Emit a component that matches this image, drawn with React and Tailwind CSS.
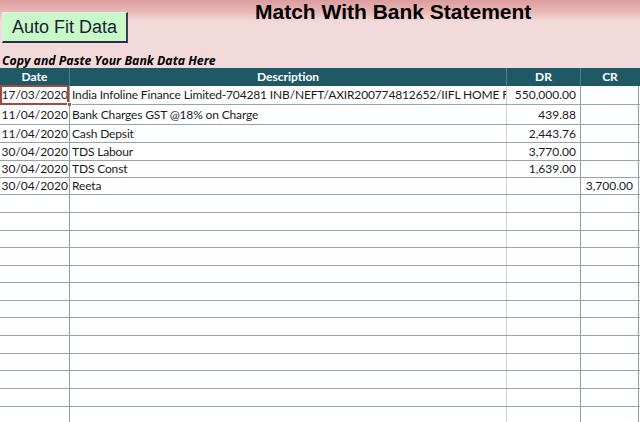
import React from 'react'

const rows = [
  { date: '17/03/2020', desc: 'India Infoline Finance Limited-704281 INB/NEFT/AXIR200774812652/IIFL HOME FINANCE', dr: '550,000.00', cr: '' },
  { date: '11/04/2020', desc: 'Bank Charges GST @18% on Charge', dr: '439.88', cr: '' },
  { date: '11/04/2020', desc: 'Cash Depsit', dr: '2,443.76', cr: '' },
  { date: '30/04/2020', desc: 'TDS Labour', dr: '3,770.00', cr: '' },
  { date: '30/04/2020', desc: 'TDS Const', dr: '1,639.00', cr: '' },
  { date: '30/04/2020', desc: 'Reeta', dr: '', cr: '3,700.00' },
]

// row heights picked off the screenshot, excel rows are not all equal
const heights = [
  'h-[19px]', 'h-[20px]', 'h-[18px]', 'h-[18px]', 'h-[17px]', 'h-[17px]',
  'h-[18px]', 'h-[18px]', 'h-[17px]', 'h-[18px]', 'h-[17px]', 'h-[18px]',
  'h-[17px]', 'h-[18px]', 'h-[18px]', 'h-[17px]', 'h-[18px]', 'h-[18px]', 'h-[17px]',
]

function Row({ row, height, first }) {
  return (
    <div className={`flex ${height} border-b border-[#8fa8b0] text-[12px] leading-none text-[#1a1a1a]`}>
      <div className="relative flex w-[70px] items-center justify-end border-r border-[#8aa3ab] pr-[1px]">
        {first && (
          <>
            <div className="pointer-events-none absolute inset-x-0 -top-px -bottom-px border-2 border-[#a24a3e]" />
            <div className="absolute -bottom-[3px] -right-[3px] h-[5px] w-[5px] border border-white bg-[#a24a3e]" />
          </>
        )}
        <span>{row?.date}</span>
      </div>
      {/* long bank narrations get clipped at the column edge, like excel */}
      <div className="flex w-[437px] items-center overflow-hidden whitespace-nowrap border-r border-[#c5d3d8] pl-[2px] tracking-[-0.15px]">
        <span className="min-w-0">{row?.desc}</span>
      </div>
      <div className="flex w-[74px] items-center justify-end border-r border-[#8aa3ab] pr-[4px]">
        {row?.dr}
      </div>
      <div className="flex w-[58px] items-center justify-end border-r border-[#8aa3ab] pr-[5px]">
        {row?.cr}
      </div>
    </div>
  )
}

export default function App() {
  return (
    <div className="h-[422px] w-[640px] overflow-hidden bg-white font-['Lato',sans-serif]">
      {/* ===== TOP BAND ===== */}
      <div className="flex h-[68px] flex-col bg-[linear-gradient(to_bottom,#dc9c9c_0px,#e8b8b8_12px,#efcaca_17px,#f2dada_22px)]">
        <div className="flex flex-1 items-start">
          <button
            className="
              ml-[2px] mt-[12px] h-[31px] w-[126px]
              border border-t-[#e8e8e8] border-l-[#e8e8e8] border-r-[#3c3c58] border-b-[#2c2c48]
              border-b-2 border-r-2 bg-[#c8fac8]
              font-['Liberation_Sans',Arial,sans-serif] text-[18px] leading-none text-[#1c1c38]
            "
          >
            Auto Fit Data
          </button>
          <h1 className="ml-[127px] pt-[1px] font-['Liberation_Sans',Arial,sans-serif] text-[21px] font-bold leading-[22px] text-black">
            Match With Bank Statement
          </h1>
        </div>
        <div className="pl-[2px] font-['Open_Sans',sans-serif] text-[12.3px] font-bold italic leading-[15px] text-black">
          Copy and Paste Your Bank Data Here
        </div>
      </div>

      {/* ===== HEADER ===== */}
      <div className="flex h-[18px] bg-[#1f5966] text-[12px] font-bold leading-none text-white">
        <div className="flex w-[70px] items-center justify-center border-r border-[#4a8290]">Date</div>
        <div className="flex w-[437px] items-center justify-center border-r border-[#4a8290]">Description</div>
        <div className="flex w-[74px] items-center justify-center border-r border-[#4a8290]">DR</div>
        <div className="flex w-[58px] items-center justify-center">CR</div>
      </div>

      {/* ===== ROWS ===== */}
      {heights.map((h, i) => (
        <Row key={i} row={rows[i]} height={h} first={i === 0} />
      ))}
    </div>
  )
}
